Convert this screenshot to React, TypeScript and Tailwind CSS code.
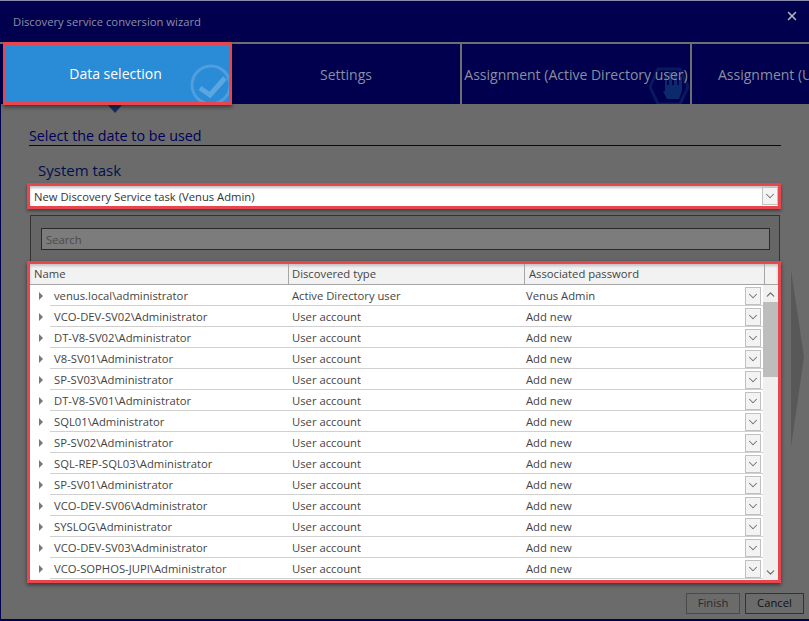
import { ChevronDown, ChevronUp, X } from "lucide-react";

const rows = [
  ["venus.local\\administrator", "Active Directory user", "Venus Admin"],
  ["VCO-DEV-SV02\\Administrator", "User account", "Add new"],
  ["DT-V8-SV02\\Administrator", "User account", "Add new"],
  ["V8-SV01\\Administrator", "User account", "Add new"],
  ["SP-SV03\\Administrator", "User account", "Add new"],
  ["DT-V8-SV01\\Administrator", "User account", "Add new"],
  ["SQL01\\Administrator", "User account", "Add new"],
  ["SP-SV02\\Administrator", "User account", "Add new"],
  ["SQL-REP-SQL03\\Administrator", "User account", "Add new"],
  ["SP-SV01\\Administrator", "User account", "Add new"],
  ["VCO-DEV-SV06\\Administrator", "User account", "Add new"],
  ["SYSLOG\\Administrator", "User account", "Add new"],
  ["VCO-DEV-SV03\\Administrator", "User account", "Add new"],
  ["VCO-SOPHOS-JUPI\\Administrator", "User account", "Add new"],
];

const DropBtn = () => (
  <div className="w-[16px] h-[18px] border border-[#c0c0c0] bg-[#f3f3f3] flex items-center justify-center shrink-0">
    <ChevronDown size={14} strokeWidth={1.75} className="text-[#707070]" />
  </div>
);

export default function App() {
  return (
    <div className="w-[809px] h-[621px] flex flex-col relative overflow-hidden bg-[#6b6b6b] border-t border-[#8c8cb0] border-b-2 border-b-[#00004e] font-['Open_Sans',sans-serif]">
      <div className="h-[41px] bg-[#00004e] flex justify-between shrink-0 pl-[13px] pr-[10px]">
        <span className="text-[11.25px] text-[#8d8fa5] mt-[13px]">Discovery service conversion wizard</span>
        <X size={14} strokeWidth={2.5} className="text-[#b9bbc9] mt-[8px]" />
      </div>

      <div className="h-[62px] bg-[#00004e] border-t-2 border-[#6f6f6f] flex shrink-0 relative text-[14px] text-[#8a8f9f]">
        <div className="relative z-10 w-[229px] h-[63px] -mt-[2px] ml-[3px] pr-[4px] border-[3px] border-[#e8464f] bg-[#2a8bd6] flex items-center justify-center text-white shrink-0 overflow-hidden shadow-[0_2px_4px_rgba(0,0,0,0.5)]">
          Data selection
          <svg className="absolute left-[182px] top-[17px]" width="46" height="46" viewBox="0 0 46 46" fill="none">
            <circle cx="23" cy="23" r="19" stroke="#4f9edd" strokeWidth="3" />
            <path d="M12 26l10 7 15-17" stroke="#5ca6e0" strokeWidth="5" />
          </svg>
        </div>
        <div className="w-[230px] h-full border-r-2 border-[#6f6f6f] flex items-center justify-center shrink-0">Settings</div>
        <div className="relative w-[230px] h-full border-r-2 border-[#6f6f6f] flex items-center justify-center whitespace-nowrap shrink-0 overflow-hidden">
          <svg className="absolute left-[187px] top-[19px]" width="40" height="41" viewBox="0 0 40 41" fill="none">
            <path d="M9 6h22l8 18-8 17H9L1 24z" stroke="#07195f" strokeWidth="3" />
            <path d="M14 28l4 8h12l3-8V14h-3v8h-2V10h-3v12h-2V9h-3v13h-2V11h-2v17z" fill="#0a2a6c" />
          </svg>
          <span className="relative">Assignment (Active Directory user)</span>
        </div>
        <div className="pl-[26px] flex items-center whitespace-nowrap">Assignment (User account)</div>
      </div>

      <div className="flex-1 relative pl-[26px] pr-[28px] flex flex-col border-l border-[#00004e]">
        <div className="absolute left-[107px] top-[1px] w-0 h-0 border-x-[7px] border-x-transparent border-t-[8px] border-t-[#1a2a60]" />

        <div className="ml-[2px] mt-[23px] h-[19px] border-b border-[#00005a] text-[14.3px] leading-[18px] text-[#00005a]">
          Select the date to be used
        </div>
        <div className="ml-[11px] mt-[14px] text-[15px] leading-[20px] text-[#00104f]">System task</div>

        <div className="mt-[3px] h-[26px] border-[3px] border-[#e8464f] bg-white flex items-center justify-between pl-[4px] text-[11.25px] leading-[22px] text-[#333] shadow-[0_2px_3px_rgba(0,0,0,0.4),inset_0_2px_3px_rgba(0,0,0,0.25)]">
          <span className="mt-[1px]">New Discovery Service task (Venus Admin)</span>
          <DropBtn />
        </div>

        <div className="ml-[3px] mr-[1px] mt-[6px] h-[46px] border border-b-0 border-[#333] bg-[#666] pl-[10px] pr-[9px] pt-[12px]">
          <div className="h-[22px] border border-[#2b2b2b] bg-[#7c7c7c] text-[11.25px] leading-[22px] text-[#4b4b4b] pl-[4px]">Search</div>
        </div>

        <div className="h-[322px] border-[3px] border-[#e8464f] bg-white flex flex-col overflow-hidden shadow-[0_2px_4px_rgba(0,0,0,0.5)]">
          <div className="h-[21px] flex border-b border-[#a6a6a6] bg-[#f2f2f2] text-[11.25px] leading-[20px] text-[#444] shrink-0 shadow-[inset_0_2px_3px_rgba(0,0,0,0.2)]">
            <div className="w-[259px] pl-[4px] border-r border-[#a6a6a6]">Name</div>
            <div className="w-[236px] pl-[3px] border-r border-[#a6a6a6]">Discovered type</div>
            <div className="w-[240px] pl-[4px] border-r border-[#a6a6a6]">Associated password</div>
          </div>
          <div className="flex flex-1 min-h-0">
            <div className="flex-1 min-w-0 overflow-hidden">
              {rows.map((r) => (
                <div key={r[0]} className="h-[21px] flex items-center relative text-[11.25px] text-[#444]">
                  <div className="absolute left-[20px] right-0 bottom-0 h-px bg-[#d0d0d0]" />
                  <div className="w-0 h-0 ml-[9px] mr-[11px] border-y-[4px] border-y-transparent border-l-[4px] border-l-[#777] shrink-0" />
                  <div className="w-[238px] shrink-0 whitespace-nowrap pt-[2px]">{r[0]}</div>
                  <div className="w-[234px] shrink-0 pt-[2px]">{r[1]}</div>
                  <div className="flex-1 pt-[2px]">{r[2]}</div>
                  <div className="mr-[2px]"><DropBtn /></div>
                </div>
              ))}
            </div>
            <div className="w-[15px] bg-[#f0f0f0] flex flex-col items-center shrink-0">
              <ChevronUp size={13} strokeWidth={2} className="text-[#666] mt-[3px] mb-[1px] shrink-0" />
              <div className="w-full h-[75px] bg-[#bdbdbd]" />
              <div className="flex-1" />
              <ChevronDown size={13} strokeWidth={2} className="text-[#666] mb-[1px]" />
            </div>
          </div>
        </div>

        <div className="flex justify-end gap-[5px] mt-[10px] mr-[-23px] text-[11.25px]">
          <div className="w-[54px] h-[21px] border border-[#4a4a4a] text-[#2a2a2a] flex items-center justify-center">Finish</div>
          <div className="w-[59px] h-[21px] border border-[#333] text-[#111] flex items-center justify-center">Cancel</div>
        </div>

        {/* next arrow behind the table */}
        <svg className="absolute left-[790px] top-[166px]" width="14" height="177" viewBox="0 0 14 177">
          <path d="M0 0l13 87L0 177z" fill="#585858" />
        </svg>
      </div>
    </div>
  );
}
